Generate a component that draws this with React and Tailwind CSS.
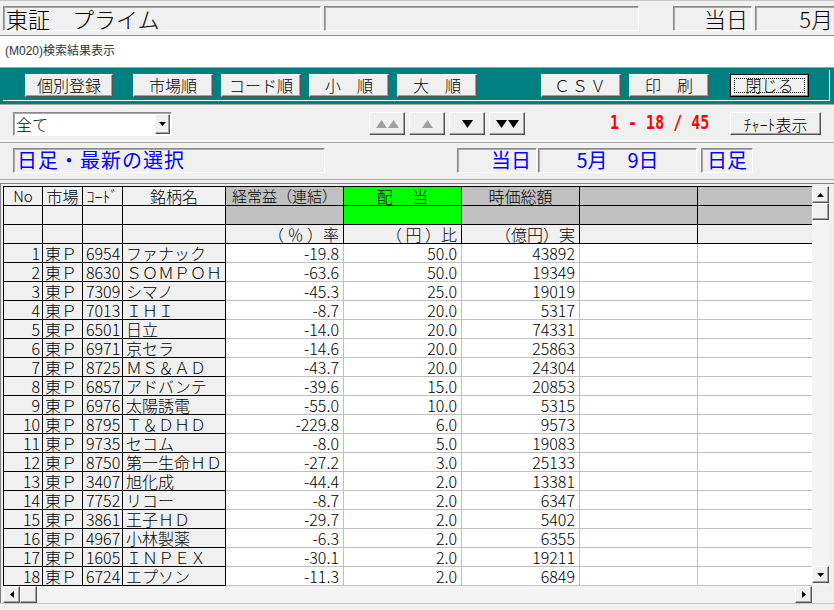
import React from 'react';

const data = [
  ['1', '6954', 'ファナック', '-19.8', '50.0', '43892'],
  ['2', '8630', 'ＳＯＭＰＯＨ', '-63.6', '50.0', '19349'],
  ['3', '7309', 'シマノ', '-45.3', '25.0', '19019'],
  ['4', '7013', 'ＩＨＩ', '-8.7', '20.0', '5317'],
  ['5', '6501', '日立', '-14.0', '20.0', '74331'],
  ['6', '6971', '京セラ', '-14.6', '20.0', '25863'],
  ['7', '8725', 'ＭＳ＆ＡＤ', '-43.7', '20.0', '24304'],
  ['8', '6857', 'アドバンテ', '-39.6', '15.0', '20853'],
  ['9', '6976', '太陽誘電', '-55.0', '10.0', '5315'],
  ['10', '8795', 'Ｔ＆ＤＨＤ', '-229.8', '6.0', '9573'],
  ['11', '9735', 'セコム', '-8.0', '5.0', '19083'],
  ['12', '8750', '第一生命ＨＤ', '-27.2', '3.0', '25133'],
  ['13', '3407', '旭化成', '-44.4', '2.0', '13381'],
  ['14', '7752', 'リコー', '-8.7', '2.0', '6347'],
  ['15', '3861', '王子ＨＤ', '-29.7', '2.0', '5402'],
  ['16', '4967', '小林製薬', '-6.3', '2.0', '6355'],
  ['17', '1605', 'ＩＮＰＥＸ', '-30.1', '2.0', '19211'],
  ['18', '6724', 'エプソン', '-11.3', '2.0', '6849'],
];

const raised =
  'bg-[#f0f0f0] border border-t-white border-l-white border-r-[#555555] border-b-[#555555] shadow-[inset_-1px_-1px_0_#a0a0a0]';
const sunken =
  'border border-t-[#8a8a8a] border-l-[#8a8a8a] border-r-white border-b-white shadow-[inset_1px_1px_0_#a8a8a8]';

const fixCell =
  'h-[19px] shrink-0 border-r border-b border-black bg-[#f0f0f0] text-[16px] leading-[18px] overflow-hidden whitespace-nowrap';
const datCell =
  'h-[19px] shrink-0 border-r border-b border-[#c0c0c0] bg-white text-[16px] leading-[18px] text-right pr-[4px] overflow-hidden whitespace-nowrap';
const hdrCell =
  'h-[19px] shrink-0 border-r border-b border-black text-[15px] leading-[18px] overflow-hidden whitespace-nowrap';

function Tri({ dir = 'up', color = '#000', w = 9, h = 5 }) {
  const pts = dir === 'up' ? `0,${h} ${w / 2},0 ${w},${h}` : dir === 'down' ? `0,0 ${w / 2},${h} ${w},0` : dir === 'left' ? `${h},0 0,${w / 2} ${h},${w}` : `0,0 ${h},${w / 2} 0,${w}`;
  const vw = dir === 'up' || dir === 'down' ? w : h;
  const vh = dir === 'up' || dir === 'down' ? h : w;
  return (
    <svg width={vw} height={vh} viewBox={`0 0 ${vw} ${vh}`}>
      <polygon points={pts} fill={color} />
    </svg>
  );
}

function TBtn({ children, className }) {
  return (
    <div className={`${raised} h-[23px] w-[80px] shrink-0 flex items-center justify-center text-[16px] leading-none whitespace-pre ${className || ''}`}>
      {children}
    </div>
  );
}

function SBtn({ dir }) {
  return (
    <div className={`${raised} w-[17px] h-[17px] shrink-0 flex items-center justify-center`}>
      <Tri dir={dir} w={7} h={4} />
    </div>
  );
}

export default function App() {
  return (
    <div className="w-[834px] h-[610px] overflow-hidden bg-white text-black font-light font-['Noto_Sans_CJK_JP',sans-serif]">
      {/* title bar */}
      <div className="h-[36px] bg-[#f0f0f0] border-t border-t-[#c8c8c8] border-b border-b-[#8a8a8a] flex pl-[3px] pt-[5px]">
        <div className={`${sunken} w-[318px] h-[25px] pl-[2px] text-[22px] leading-[23px] whitespace-pre`}>東証　プライム</div>
        <div className={`${sunken} ml-[3px] w-[315px] h-[25px]`}></div>
        <div className={`${sunken} ml-[34px] w-[79px] h-[25px] text-right pr-[3px] text-[22px] leading-[23px]`}>当日</div>
        <div className="ml-[3px] flex-1 h-[25px] border-t border-l border-b border-t-[#8a8a8a] border-l-[#8a8a8a] border-b-white shadow-[inset_1px_1px_0_#a8a8a8] text-right pr-[1px] text-[22px] leading-[23px]">5月</div>
      </div>

      {/* caption */}
      <div className="h-[31px] pl-[5px] pt-[6px] text-[12px] leading-[16px] text-[#333333] font-normal">
        <span className="font-['Liberation_Sans','Noto_Sans_CJK_JP',sans-serif]">(M020)</span>検索結果表示
      </div>

      {/* teal toolbar */}
      <div className="h-[37px] bg-[#008080] border-t border-t-[#a0a0a0] pl-[3px] pr-[4px] pt-[2px] pb-[3px]">
        <div className="h-full border-r border-b border-white flex items-center">
          <TBtn className="ml-[22px] w-[88px]">個別登録</TBtn>
          <TBtn className="ml-[20px]">市場順</TBtn>
          <TBtn className="ml-[8px]">コード順</TBtn>
          <TBtn className="ml-[8px]">小　順</TBtn>
          <TBtn className="ml-[8px]">大　順</TBtn>
          <TBtn className="ml-[64px] tracking-[2px]">ＣＳＶ</TBtn>
          <TBtn className="ml-[8px]">印　刷</TBtn>
          <div className="ml-[21px] w-[79px] h-[23px] shrink-0 border border-black">
            <div className="w-full h-full border border-t-white border-l-white border-r-[#808080] border-b-[#808080] bg-[#f0f0f0] p-[2px]">
              <div className="w-full h-full border border-dotted border-black flex items-center justify-center text-[16px] leading-none">閉じる</div>
            </div>
          </div>
        </div>
      </div>

      {/* filter row */}
      <div className="h-[37px] bg-[#f0f0f0] border-t border-t-[#a8a8a8] border-b border-b-white flex items-start pl-[13px] pr-[13px] pt-[7px]">
        <div className={`${sunken} bg-white w-[159px] h-[24px] flex items-center justify-between pr-[1px]`}>
          <span className="pl-[2px] text-[16px] leading-[18px]">全て</span>
          <div className={`${raised} w-[15px] h-[20px] flex items-center justify-center`}>
            <Tri dir="down" w={7} h={4} />
          </div>
        </div>
        <div className="ml-[197px] flex gap-[4px]">
          <div className={`${raised} w-[36px] h-[23px] flex items-center justify-center gap-[1px]`}>
            <Tri dir="up" color="#a0a0a0" w={11} h={8} />
            <Tri dir="up" color="#a0a0a0" w={11} h={8} />
          </div>
          <div className={`${raised} w-[36px] h-[23px] flex items-center justify-center`}>
            <Tri dir="up" color="#a0a0a0" w={11} h={8} />
          </div>
          <div className={`${raised} w-[36px] h-[23px] flex items-center justify-center`}>
            <Tri dir="down" w={11} h={8} />
          </div>
          <div className={`${raised} w-[36px] h-[23px] flex items-center justify-center gap-[1px]`}>
            <Tri dir="down" w={11} h={8} />
            <Tri dir="down" w={11} h={8} />
          </div>
        </div>
        <div className="ml-[85px] h-[23px] flex items-center text-[#ff0000] font-bold text-[15px] whitespace-pre font-['DejaVu_Sans_Mono',monospace] scale-y-[1.25]">1 - 18 / 45</div>
        <div className={`${raised} ml-auto w-[91px] h-[23px] flex items-center justify-center text-[16px] leading-none`}>ﾁｬｰﾄ表示</div>
      </div>

      {/* selection row */}
      <div className="h-[42px] bg-[#f0f0f0] pt-[1px]">
        <div className="h-[38px] border-t border-t-[#a8a8a8] border-b border-b-[#a8a8a8] flex pl-[13px] pt-[5px] text-[#0000ff] text-[20px] leading-[22px] font-normal">
          <div className={`${sunken} w-[312px] h-[25px] pl-[3px] tracking-[1px]`}>日足・最新の選択</div>
          <div className={`${sunken} ml-[132px] w-[80px] h-[25px] text-right pr-[5px]`}>当日</div>
          <div className={`${sunken} ml-[1px] w-[159px] h-[25px] text-center whitespace-pre`}>5月　9日</div>
          <div className={`${sunken} ml-[4px] w-[52px] h-[25px] text-center`}>日足</div>
        </div>
      </div>

      {/* grid frame */}
      <div className="h-[420px] bg-[#f0f0f0] border-t border-l border-[#808080] pl-[2px] pt-[2px]">
        <div className="flex h-[400px]">
          <div className="w-[809px] h-[400px] border-t border-l border-black bg-white flex flex-col">
            {/* header row 1 */}
            <div className="flex">
              <div className={`${hdrCell} w-[39px] bg-[#f0f0f0] text-center`}>No</div>
              <div className={`${hdrCell} w-[40px] bg-[#f0f0f0] text-center text-[16px]`}>市場</div>
              <div className={`${hdrCell} w-[40px] bg-[#f0f0f0] text-center text-[16px]`}>ｺｰﾄﾞ</div>
              <div className={`${hdrCell} w-[103px] bg-[#f0f0f0] text-center text-[16px]`}>銘柄名</div>
              <div className={`${hdrCell} w-[118px] bg-[#c0c0c0] text-center`}>経常益（連結）</div>
              <div className={`${hdrCell} w-[118px] bg-[#00ff00] text-center text-[16px] whitespace-pre`}>配　 当</div>
              <div className={`${hdrCell} w-[118px] bg-[#c0c0c0] text-center text-[16px]`}>時価総額</div>
              <div className={`${hdrCell} w-[118px] bg-[#c0c0c0]`}></div>
              <div className="h-[19px] w-[114px] shrink-0 border-b border-black bg-[#c0c0c0]"></div>
            </div>
            {/* header row 2 */}
            <div className="flex">
              <div className={`${hdrCell} w-[39px] bg-[#f0f0f0]`}></div>
              <div className={`${hdrCell} w-[40px] bg-[#f0f0f0]`}></div>
              <div className={`${hdrCell} w-[40px] bg-[#f0f0f0]`}></div>
              <div className={`${hdrCell} w-[103px] bg-[#f0f0f0]`}></div>
              <div className={`${hdrCell} w-[118px] bg-[#c0c0c0]`}></div>
              <div className={`${hdrCell} w-[118px] bg-[#00ff00]`}></div>
              <div className={`${hdrCell} w-[118px] bg-[#c0c0c0]`}></div>
              <div className={`${hdrCell} w-[118px] bg-[#c0c0c0]`}></div>
              <div className="h-[19px] w-[114px] shrink-0 border-b border-black bg-[#c0c0c0]"></div>
            </div>
            {/* header row 3 */}
            <div className="flex">
              <div className={`${hdrCell} w-[39px] bg-[#f0f0f0]`}></div>
              <div className={`${hdrCell} w-[40px] bg-[#f0f0f0]`}></div>
              <div className={`${hdrCell} w-[40px] bg-[#f0f0f0]`}></div>
              <div className={`${hdrCell} w-[103px] bg-[#f0f0f0]`}></div>
              <div className={`${hdrCell} w-[118px] bg-[#f0f0f0] text-right pr-[4px] text-[16px] whitespace-pre`}>（ ％ ）率</div>
              <div className={`${hdrCell} w-[118px] bg-[#f0f0f0] text-right pr-[4px] text-[16px] whitespace-pre`}>（ 円 ）比</div>
              <div className={`${hdrCell} w-[118px] bg-[#f0f0f0] text-right pr-[4px] text-[16px]`}>（億円）実</div>
              <div className={`${hdrCell} w-[118px] bg-[#f0f0f0]`}></div>
              <div className="h-[19px] w-[114px] shrink-0 border-b border-black bg-[#f0f0f0]"></div>
            </div>
            {/* data rows */}
            {data.map((r) => (
              <div className="flex" key={r[0]}>
                <div className={`${fixCell} w-[39px] text-right pr-[2px]`}>{r[0]}</div>
                <div className={`${fixCell} w-[40px] pl-[2px]`}>東Ｐ</div>
                <div className={`${fixCell} w-[40px] pl-[3px]`}>{r[1]}</div>
                <div className={`${fixCell} w-[103px] pl-[3px]`}>
                  {r[2] === '日立' ? <span className="underline underline-offset-[2px]">{r[2]}</span> : r[2]}
                </div>
                <div className={`${datCell} w-[118px]`}>{r[3]}</div>
                <div className={`${datCell} w-[118px]`}>{r[4]}</div>
                <div className={`${datCell} w-[118px]`}>{r[5]}</div>
                <div className={`${datCell} w-[118px]`}></div>
                <div className="h-[19px] w-[114px] shrink-0 border-b border-[#c0c0c0] bg-white"></div>
              </div>
            ))}
          </div>
          {/* vertical scrollbar */}
          <div className="w-[17px] h-[400px] bg-[#f4f4f4] flex flex-col justify-between">
            <div className="flex flex-col">
              <SBtn dir="up" />
              <div className={`${raised} w-[17px] h-[17px]`}></div>
            </div>
            <div className="mb-[3px]">
              <SBtn dir="down" />
            </div>
          </div>
        </div>
        {/* horizontal scrollbar */}
        <div className="flex h-[17px]">
          <div className="w-[809px] h-[17px] bg-[#f4f4f4] flex justify-between">
            <div className="flex">
              <SBtn dir="left" />
              <div className={`${raised} w-[17px] h-[17px]`}></div>
            </div>
            <SBtn dir="right" />
          </div>
        </div>
      </div>

      {/* bottom strip */}
      <div className="h-[7px] bg-[#f0f0f0] border-t border-t-[#c8c8c8]"></div>
    </div>
  );
}
